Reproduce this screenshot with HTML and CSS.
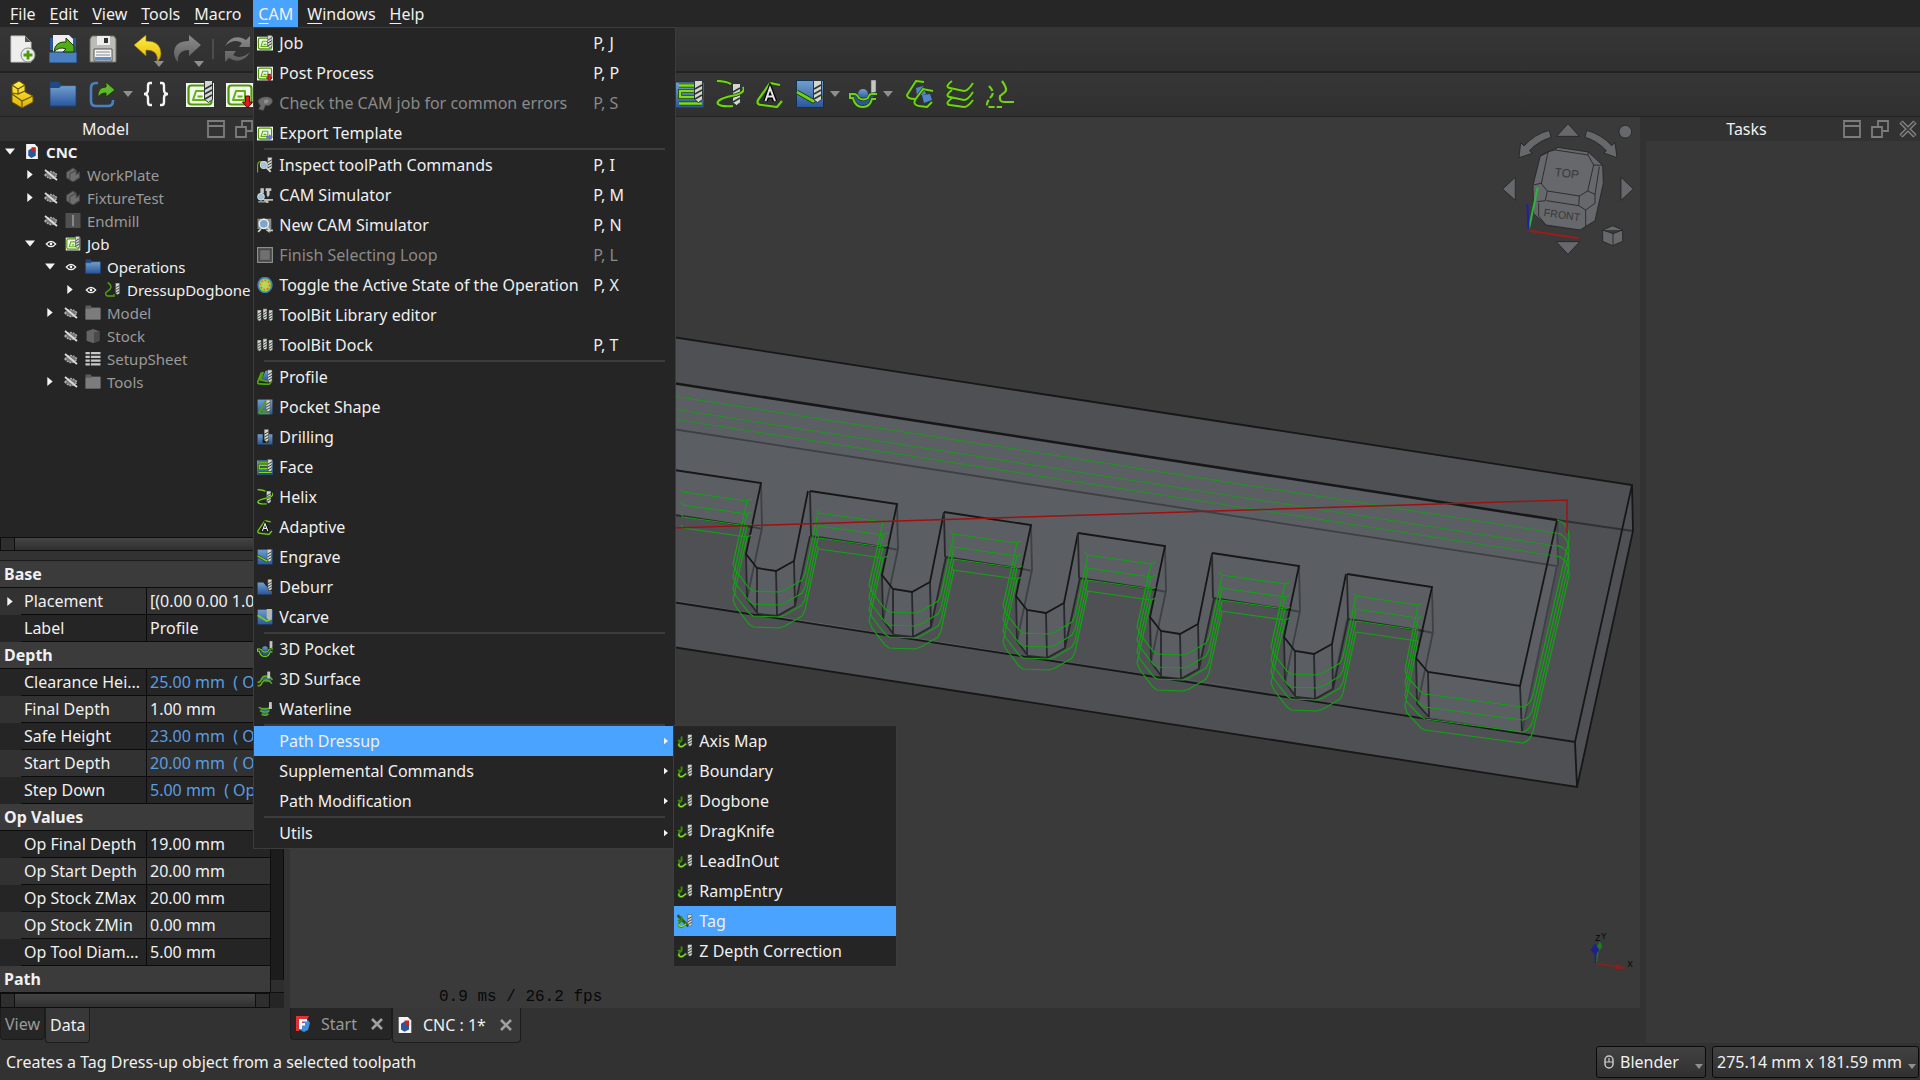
FILE: index.html
```
<!DOCTYPE html>
<html lang="en">
<head>
    <meta charset="UTF-8">
    <meta name="viewport" content="width=device-width, initial-scale=1.0">
    <title>CNC - FreeCAD</title>
    <link rel="stylesheet" href="styles.css">
</head>
<body>
    <!-- icon sprite -->
    <svg class="sprite" aria-hidden="true">
        <defs>
            <linearGradient id="blue" x1="0" y1="0" x2="0" y2="1"><stop offset="0" stop-color="#729fcf"/><stop offset="1" stop-color="#2a569c"/></linearGradient>
            <linearGradient id="grey" x1="0" y1="0" x2="0" y2="1"><stop offset="0" stop-color="#8c8c8c"/><stop offset="1" stop-color="#5c5c5c"/></linearGradient>
            <linearGradient id="gold" x1="0" y1="0" x2="0" y2="1"><stop offset="0" stop-color="#fff04a"/><stop offset="1" stop-color="#e0b400"/></linearGradient>
        </defs>
        <symbol id="drill" viewBox="0 0 9 23">
            <path d="M.5.5h8v19l-4 3-4-3z" fill="#d3d7cf" stroke="#2e3436"/>
            <path d="M1 9l7-4M1 14l7-4M1 19l7-4" stroke="#2e3436" stroke-width="1.6"/>
        </symbol>
        <symbol id="jobsheet" viewBox="0 0 28 28">
            <rect x="0" y="3" width="28" height="24" fill="#f4f6f2"/>
            <rect x="2.500" y="5.500" width="23" height="19" rx="3" fill="none" stroke="#4e9a06" stroke-width="2.200"/>
            <path d="M7 20l3-9h9v9zM11.500 16.500h5" fill="none" stroke="#5fb30a" stroke-width="2" stroke-linejoin="round"/>
        </symbol>
        <symbol id="job" viewBox="0 0 28 28"><use href="#jobsheet"/><use href="#drill" x="18" y="0" width="9" height="23"/></symbol>
        <symbol id="post" viewBox="0 0 28 28"><use href="#jobsheet"/><path d="M19.500 16h4v6h3l-5 6-5-6h3z" fill="#e01b1b" stroke="#5c0000"/></symbol>
        <symbol id="exporttpl" viewBox="0 0 28 28"><use href="#jobsheet"/><path d="M16 19h5v-3l7 5-7 6v-4h-5z" fill="#6a6af0"/></symbol>
        <symbol id="check" viewBox="0 0 28 28"><path d="M2 12c0-10 24-12 25-2 0 6-5 7-7 9l-5-1-4 9-8-2 3-6z" fill="#6c6c6c" stroke="#4a4a4a"/><path d="M12 10q4-4 9 0l-3 5h-5z" fill="#8e8e8e"/></symbol>
        <symbol id="inspect" viewBox="0 0 28 28"><path d="M1 27V15q0-7 6-7h4" fill="none" stroke="#5fb30a" stroke-width="2"/><use href="#drill" x="18" y="0" width="9" height="23"/><circle cx="12" cy="14" r="6" fill="#9fc0dc" stroke="#d3d7cf" stroke-width="2"/><path d="M17 19l7 7" stroke="#d3d7cf" stroke-width="3.500"/></symbol>
        <symbol id="sim" viewBox="0 0 28 28"><path d="M6 2h6v9H6zM15 2h10v5h-3v7l-3 4-2-4V7h-2z" fill="#c4c8c2"/><path d="M10 21h18v3H20v4h-4z" fill="#b9bdb6"/><circle cx="7" cy="17" r="6" fill="#9fc0dc" stroke="#dfe3dc" stroke-width="1.500"/><path d="M2 26h12" stroke="#b9bdb6" stroke-width="2"/></symbol>
        <symbol id="newsim" viewBox="0 0 28 28"><path d="M1 3h24v18H1z" fill="#8a8f8a"/><path d="M14 22h14v3h-6v3z" fill="#c4c8c2"/><circle cx="12" cy="12" r="8" fill="#7ea6cc" stroke="#eef1ec" stroke-width="2.500"/><path d="M7 21l-5 5M18 18l6 7" stroke="#d3d7cf" stroke-width="3"/></symbol>
        <symbol id="loop" viewBox="0 0 28 28"><rect x="1" y="1" width="26" height="26" fill="#4c4c4c" stroke="#8c8c8c" stroke-width="2"/><rect x="5" y="5" width="18" height="18" fill="#707070" stroke="#3c3c3c"/></symbol>
        <symbol id="toggle" viewBox="0 0 28 28"><ellipse cx="14" cy="14" rx="12" ry="13" fill="#8ae234" stroke="#3f7fbf" stroke-width="3"/><circle cx="14" cy="14" r="8" fill="#b6d65c" stroke="#f06a20" stroke-width="3" stroke-dasharray="3 3"/></symbol>
        <symbol id="bits" viewBox="0 0 28 28"><use href="#drill" x="0" y="4" width="8" height="22"/><use href="#drill" x="10" y="1" width="8" height="24"/><use href="#drill" x="20" y="4" width="8" height="22"/></symbol>
        <symbol id="profile" viewBox="0 0 28 28"><path d="M9 16l6-13h10v17H9z" fill="url(#blue)"/><path d="M8 6L1 23q0 3 4 3l16 1 5-6M11 5L6 19l14 3" fill="none" stroke="#4fa50a" stroke-width="3"/><use href="#drill" x="18" y="1" width="9" height="23"/></symbol>
        <symbol id="pocket" viewBox="0 0 28 28"><rect x="1" y="1" width="26" height="26" fill="url(#blue)"/><path d="M3 25L14 5h9M9 21h9l5-6M4 25h18" fill="none" stroke="#4fa50a" stroke-width="3"/><use href="#drill" x="15" y="1" width="9" height="22"/></symbol>
        <symbol id="drilling" viewBox="0 0 28 28"><path d="M1 9h9v14h10V9h7v18H1z" fill="url(#blue)"/><path d="M10 20h10v4H10z" fill="#111"/><use href="#drill" x="12" y="0" width="9" height="23"/><circle cx="17" cy="22" r="1.500" fill="#5fb30a"/></symbol>
        <symbol id="face" viewBox="0 0 28 28"><rect x="-1" y="2" width="29" height="26" fill="url(#blue)" stroke="#14304f"/><path d="M25 5.500H3M22 11H4v6h18M26 23.500H3" fill="none" stroke="#1e3c05" stroke-width="4"/><path d="M25 5.500H3M22 11H4v6h18M26 23.500H3" fill="none" stroke="#7ede12" stroke-width="2.400"/><use href="#drill" x="18" y="0" width="9" height="23"/></symbol>
        <symbol id="helix" viewBox="0 0 28 28"><use href="#drill" x="16" y="3" width="9" height="23"/><path d="M1 1q8 0 14 3M27 7q3 5-7 8-21 4-18 9 3 3 15 2" fill="none" stroke="#1e3c05" stroke-width="3.500"/><path d="M1 1q8 0 14 3M27 7q3 5-7 8-21 4-18 9 3 3 15 2" fill="none" stroke="#73d216" stroke-width="2.200"/></symbol>
        <symbol id="adaptive" viewBox="0 0 28 28"><path d="M24 5L14 3 2 20q-2 5 4 5l15 2 5-6" fill="none" stroke="#1e3c05" stroke-width="3.500"/><path d="M24 5L14 3 2 20q-2 5 4 5l15 2 5-6" fill="none" stroke="#73d216" stroke-width="2.200"/><path d="M9.500 21l4.500-13 5 13M11.500 16.500h5.500" fill="none" stroke="#000" stroke-width="4.500"/><path d="M9.500 21l4.500-13 5 13M11.500 16.500h5.500" fill="none" stroke="#e6e6e6" stroke-width="2"/></symbol>
        <symbol id="engrave" viewBox="0 0 28 28"><rect x=".5" y=".5" width="27" height="27" fill="url(#blue)" stroke="#14304f"/><path d="M1 12l16 9 9-6" fill="none" stroke="#1e3c05" stroke-width="4.500"/><path d="M1 12l16 9 9-6" fill="none" stroke="#73d216" stroke-width="2.800"/><use href="#drill" x="17" y="0" width="9" height="23"/></symbol>
        <symbol id="deburr" viewBox="0 0 28 28"><path d="M1 6h10l9 11v4h6v6H1z" fill="url(#blue)"/><use href="#drill" x="18" y="0" width="9" height="21"/></symbol>
        <symbol id="vcarve" viewBox="0 0 28 28"><rect x=".5" y=".5" width="27" height="27" fill="url(#blue)" stroke="#14304f"/><path d="M1 11l16 10 9-4" fill="none" stroke="#73d216" stroke-width="3"/><path d="M17 0h9v16l-4 4-5-4z" fill="#b8b8b0"/></symbol>
        <symbol id="pocket3d" viewBox="0 0 28 28"><path d="M3 15h22q-2 10-11 10T3 15z" fill="#2a569c"/><circle cx="14" cy="14" r="5" fill="url(#blue)"/><path d="M22 0h5v12l-5 2z" fill="#c4c8c2" stroke="#555" stroke-width=".6"/><path d="M28 14h-5q-3 0-4 4-5 3-9 0-2-4-5-4H1v4h3q2 9 10 9 7 0 9-8h4" fill="none" stroke="#1e3c05" stroke-width="3.200"/><path d="M28 14h-5q-3 0-4 4-5 3-9 0-2-4-5-4H1v4h3q2 9 10 9 7 0 9-8h4" fill="none" stroke="#73d216" stroke-width="2"/></symbol>
        <symbol id="surface3d" viewBox="0 0 28 28"><path d="M7 14q6-9 13-4l5 8-10 2z" fill="#35649e"/><path d="M1 20q5 0 7-6t10-5q6 1 9 7M1 26q6 0 8-6 4-5 8-4 6 1 9 6" fill="none" stroke="#5fb30a" stroke-width="2.600"/><path d="M18 1h5v12h-5z" fill="#c4c8c2"/></symbol>
        <symbol id="waterline" viewBox="0 0 28 28"><path d="M5 12h18l-4 12H10z" fill="#35649e"/><path d="M3 11q11 6 20 0M5 17q9 5 17 0M8 23q6 4 12 0" fill="none" stroke="#5fb30a" stroke-width="2.400"/><path d="M21 2h5v12h-5z" fill="#c4c8c2"/></symbol>
        <symbol id="dressup" viewBox="0 0 28 28"><path d="M8 6v7q-6 5-5 9 4 5 8 1l5-5M6 16l-4-4" fill="none" stroke="#3d8a05" stroke-width="3.400"/><path d="M3 19q1 6 7 4l6-4" fill="none" stroke="#8ae234" stroke-width="2"/><use href="#drill" x="18" y="2" width="9" height="22"/></symbol>
        <symbol id="dresstag" viewBox="0 0 28 28"><path d="M1 4l19 19" stroke="#2d5d16" stroke-width="5"/><use href="#dressup"/></symbol>
        <symbol id="dogbone" viewBox="0 0 28 28"><path d="M4 1q7 4 6 9t-7 8 0 8h13v-3" fill="none" stroke="#4fa50a" stroke-width="2.600"/><use href="#drill" x="18" y="1" width="9" height="24"/></symbol>
        <symbol id="array" viewBox="0 0 28 28"><path d="M10 8l7-2 3 8-9 2zM16 15l8-1 2 6-8 3z" fill="#4f86c6"/><path d="M18 2L10 1 1 15q0 4 8 4M27 11L17 9 9 20q-2 5 4 6l8 1 5-5" fill="none" stroke="#1e3c05" stroke-width="3.200"/><path d="M18 2L10 1 1 15q0 4 8 4M27 11L17 9 9 20q-2 5 4 6l8 1 5-5" fill="none" stroke="#73d216" stroke-width="2"/></symbol>
        <symbol id="copyop" viewBox="0 0 28 28"><path d="M6 1q-8 6-2 7l14 3q4 0 9-8M6 10q-8 6-2 7l14 3q4 0 9-8M6 18q-8 6-2 7l14 2q4 0 9-7" fill="none" stroke="#1e3c05" stroke-width="3.200"/><path d="M6 1q-8 6-2 7l14 3q4 0 9-8M6 10q-8 6-2 7l14 3q4 0 9-8M6 18q-8 6-2 7l14 2q4 0 9-7" fill="none" stroke="#73d216" stroke-width="2"/></symbol>
        <symbol id="simplecopy" viewBox="0 0 28 28"><path d="M16 1q6 8 3 11l-5 4q-1 6 4 6h10" fill="none" stroke="#73d216" stroke-width="2.200"/><path d="M3 6q7 7 1 12-6 8 0 9h12" fill="none" stroke="#73d216" stroke-width="2.200" stroke-dasharray="6 2"/></symbol>
        <symbol id="new" viewBox="0 0 28 28"><path d="M2 1h14l6 6v20H2z" fill="#eeeeec" stroke="#c8c8c4"/><path d="M16 1l6 6h-6z" fill="#555753"/><circle cx="19" cy="20" r="7" fill="#eeeeec" stroke="#888a85"/><path d="M19 15.500v9M14.500 20h9" stroke="#4e9a06" stroke-width="2.800"/></symbol>
        <symbol id="open" viewBox="0 0 28 28"><path d="M1 3h4v12H1zM23 3h4v14h-4z" fill="#2b5a9b"/><path d="M4 0h16l4 4v14H4z" fill="#eeeeec"/><path d="M0 17h28v11H0z" fill="#4a80c0" stroke="#1c3c66"/><path d="M5 17Q6 6 17 7V3l8 8v6H14l3-3q-7-3-12 3z" fill="#4fae12" stroke="#1e3c05"/></symbol>
        <symbol id="save" viewBox="0 0 28 28"><path d="M3 1h22l2 3v23H1V4z" fill="#b9bcb7" stroke="#6e706c"/><path d="M8 1h13v9H8z" fill="#eee"/><path d="M15 3h4v5h-4z" fill="#333"/><path d="M5 14h18v12H5z" fill="#f4f4f4" stroke="#555"/><path d="M7 17h14M7 20h14" stroke="#888"/><path d="M6 22h16v3H6z" fill="#5b8fd0"/></symbol>
        <symbol id="undo" viewBox="0 0 28 28"><path d="M0 10L12 0v6q15 0 15 13 0 4-4 8 2-12-11-12v6z" fill="url(#gold)" stroke="#8a6d00" stroke-width=".6"/></symbol>
        <symbol id="redo" viewBox="0 0 28 28"><path d="M27 10L15 0v6Q1 6 0 17q0 6 4 10-1-12 11-12v6z" fill="url(#grey)"/></symbol>
        <symbol id="refresh" viewBox="0 0 28 28"><path d="M1 11Q7 0 18 3l4 2 4-4v11H15l3-4Q10 3 1 11zM26 17q-6 11-17 8l-4-2-4 4V16h11l-3 4q8 5 17-3z" fill="url(#grey)"/></symbol>
        <symbol id="part" viewBox="0 0 28 28"><path d="M3 5l7-4 6 4v7l8 4v6l-11 6-10-6z" fill="url(#gold)" stroke="#6b5200"/><path d="M3 5l6 4 7-4M9 9v5l7-3M3 14l10 7 11-5M13 21v6M9 14l-6-1" fill="none" stroke="#6b5200" stroke-width="1.200"/></symbol>
        <symbol id="folder" viewBox="0 0 30 28"><path d="M1 1h10l2 4h16v22H1z" fill="#1f4a86"/><path d="M1 7h10l2-2h16v22H1z" fill="url(#blue)" stroke="#173a68" stroke-width=".8"/></symbol>
        <symbol id="folder-off" viewBox="0 0 30 28"><path d="M1 1h10l2 4h16v22H1z" fill="#5c5c5c"/><path d="M1 7h10l2-2h16v22H1z" fill="#7c7c7c"/></symbol>
        <symbol id="link" viewBox="0 0 28 28"><path d="M9 3H7Q2 3 2 8v13q0 5 5 5h12q5 0 5-5v-1" fill="none" stroke="#4a80c0" stroke-width="2.600"/><path d="M9 18Q8 7 17 7V2l9 8-9 7v-4q-6 0-8 5z" fill="#5fb82a" stroke="#1e3c05"/></symbol>
        <symbol id="braces" viewBox="0 0 28 28"><path d="M10 3H8Q6 3 6 6v4q0 4-4 4 4 0 4 4v4q0 3 2 3h2M18 3h2q2 0 2 3v4q0 4 4 4-4 0-4 4v4q0 3-2 3h-2" fill="none" stroke="#f4f4f4" stroke-width="2.400"/></symbol>
        <symbol id="caret" viewBox="0 0 10 6"><path d="M0 0h10L5 6z" fill="#8f8f8f"/></symbol>
        <symbol id="tri-r" viewBox="0 0 6 10"><path d="M0 0l6 5-6 5z" fill="#f4f4f4"/></symbol>
        <symbol id="tri-d" viewBox="0 0 10 6"><path d="M0 0h10L5 6z" fill="#f4f4f4"/></symbol>
        <symbol id="eye" viewBox="-2 -1 18 12"><path d="M1 5q6-7 12 0-6 7-12 0z" fill="#111" stroke="#f4f4f4" stroke-width="1.600"/><circle cx="7" cy="5" r="1.800" fill="#f4f4f4"/></symbol>
        <symbol id="eye-off" viewBox="0 0 14 12"><path d="M1 6q6-7 12 0-6 7-12 0z" fill="#777" stroke="#b0b0b0" stroke-width="1.400" stroke-dasharray="2 1"/><path d="M1 1l12 10" stroke="#dcdcdc" stroke-width="1.800"/></symbol>
        <symbol id="doc" viewBox="0 0 11 14"><path d="M0 0h8l3 3v11H0z" fill="#f4f4f4"/><path d="M2 6l3-2 4 2v5l-4 2-3-2z" fill="#2a569c"/><path d="M5 3h4v4H6z" fill="#d41f1f"/></symbol>
        <symbol id="body" viewBox="0 0 14 14"><path d="M1 5l6-4 3 2v4l3-2v5l-6 4-6-4z" fill="#6e6e6e" stroke="#484848"/><path d="M4 6l6-3M4 6v5" stroke="#484848"/></symbol>
        <symbol id="endmill" viewBox="0 0 16 16"><path d="M0 0h16v16H0z" fill="#505050"/><path d="M7 2h2v12H7z" fill="#8c8c8c"/></symbol>
        <symbol id="stock" viewBox="0 0 14 14"><path d="M1 3l6-2 6 2v9l-6 2-6-2z" fill="#646464"/><path d="M8 4l5-1v9l-5 2z" fill="#4a4a4a"/></symbol>
        <symbol id="sheet" viewBox="0 0 14 14"><path d="M0 1h4v2H0zM5 1h9v2H5zM0 4.500h4v2H0zM5 4.500h9v2H5zM0 8h4v2H0zM5 8h9v2H5zM0 11.500h4v2H0zM5 11.500h9v2H5z" fill="#c8c8c8"/></symbol>
        <symbol id="win-dock" viewBox="0 0 18 18"><path d="M1 1h16v16H1zM1 6h16" fill="none" stroke="#7c7c7c" stroke-width="1.800"/></symbol>
        <symbol id="win-float" viewBox="0 0 18 18"><path d="M7 6V1h10v10h-5M1 7h10v10H1z" fill="none" stroke="#7c7c7c" stroke-width="1.800"/></symbol>
        <symbol id="win-close" viewBox="0 0 18 18"><path d="M2 2l14 14M16 2L2 16" stroke="#8a8a8a" stroke-width="4.500"/><path d="M2.500 2.500l13 13M15.500 2.500l-13 13" stroke="#3c3c3c" stroke-width="1.800"/></symbol>
        <symbol id="tab-close" viewBox="0 0 12 12"><path d="M1 1l10 10M11 1L1 11" stroke="#a0a0a0" stroke-width="2.600"/></symbol>
        <symbol id="freecad" viewBox="0 0 14 16"><path d="M0 0h13l-2 4-8 11H0z" fill="#e0303a"/><path d="M5 8l7-4 2 3-2 7-4 2-4-2z" fill="#3f8fe0"/><path d="M3 3h8v2.500H6V7h3v2.500H6V13H3z" fill="#fff"/></symbol>
        <symbol id="mouse" viewBox="0 0 10 14"><rect x="1" y="1" width="8" height="12" rx="4" fill="none" stroke="#c8c8c8" stroke-width="1.500"/><path d="M5 3v4M1 7h8" stroke="#c8c8c8" stroke-width="1.200"/></symbol>
    </svg>

    <nav class="menubar">
        <button class="menubar-item"><u>F</u>ile</button>
        <button class="menubar-item"><u>E</u>dit</button>
        <button class="menubar-item"><u>V</u>iew</button>
        <button class="menubar-item"><u>T</u>ools</button>
        <button class="menubar-item"><u>M</u>acro</button>
        <div class="menubar-open">
            <button class="menubar-item active"><u>C</u>AM</button>
            <div class="menu">
                <button class="menu-item"><svg class="mi"><use href="#job"/></svg><span>Job</span><kbd>P, J</kbd></button>
                <button class="menu-item"><svg class="mi"><use href="#post"/></svg><span>Post Process</span><kbd>P, P</kbd></button>
                <button class="menu-item off"><svg class="mi"><use href="#check"/></svg><span>Check the CAM job for common errors</span><kbd>P, S</kbd></button>
                <button class="menu-item"><svg class="mi"><use href="#exporttpl"/></svg><span>Export Template</span></button>
                <hr>
                <button class="menu-item"><svg class="mi"><use href="#inspect"/></svg><span>Inspect toolPath Commands</span><kbd>P, I</kbd></button>
                <button class="menu-item"><svg class="mi"><use href="#sim"/></svg><span>CAM Simulator</span><kbd>P, M</kbd></button>
                <button class="menu-item"><svg class="mi"><use href="#newsim"/></svg><span>New CAM Simulator</span><kbd>P, N</kbd></button>
                <button class="menu-item off"><svg class="mi"><use href="#loop"/></svg><span>Finish Selecting Loop</span><kbd>P, L</kbd></button>
                <button class="menu-item"><svg class="mi"><use href="#toggle"/></svg><span>Toggle the Active State of the Operation</span><kbd>P, X</kbd></button>
                <button class="menu-item"><svg class="mi"><use href="#bits"/></svg><span>ToolBit Library editor</span></button>
                <button class="menu-item"><svg class="mi"><use href="#bits"/></svg><span>ToolBit Dock</span><kbd>P, T</kbd></button>
                <hr>
                <button class="menu-item"><svg class="mi"><use href="#profile"/></svg><span>Profile</span></button>
                <button class="menu-item"><svg class="mi"><use href="#pocket"/></svg><span>Pocket Shape</span></button>
                <button class="menu-item"><svg class="mi"><use href="#drilling"/></svg><span>Drilling</span></button>
                <button class="menu-item"><svg class="mi"><use href="#face"/></svg><span>Face</span></button>
                <button class="menu-item"><svg class="mi"><use href="#helix"/></svg><span>Helix</span></button>
                <button class="menu-item"><svg class="mi"><use href="#adaptive"/></svg><span>Adaptive</span></button>
                <button class="menu-item"><svg class="mi"><use href="#engrave"/></svg><span>Engrave</span></button>
                <button class="menu-item"><svg class="mi"><use href="#deburr"/></svg><span>Deburr</span></button>
                <button class="menu-item"><svg class="mi"><use href="#vcarve"/></svg><span>Vcarve</span></button>
                <hr>
                <button class="menu-item"><svg class="mi"><use href="#pocket3d"/></svg><span>3D Pocket</span></button>
                <button class="menu-item"><svg class="mi"><use href="#surface3d"/></svg><span>3D Surface</span></button>
                <button class="menu-item"><svg class="mi"><use href="#waterline"/></svg><span>Waterline</span></button>
                <hr>
                <div class="menu-parent">
                    <button class="menu-item active"><i class="mi"></i><span>Path Dressup</span><svg class="more"><use href="#tri-r"/></svg></button>
                    <div class="menu submenu">
                        <button class="menu-item"><svg class="mi"><use href="#dressup"/></svg><span>Axis Map</span></button>
                        <button class="menu-item"><svg class="mi"><use href="#dressup"/></svg><span>Boundary</span></button>
                        <button class="menu-item"><svg class="mi"><use href="#dressup"/></svg><span>Dogbone</span></button>
                        <button class="menu-item"><svg class="mi"><use href="#dressup"/></svg><span>DragKnife</span></button>
                        <button class="menu-item"><svg class="mi"><use href="#dressup"/></svg><span>LeadInOut</span></button>
                        <button class="menu-item"><svg class="mi"><use href="#dressup"/></svg><span>RampEntry</span></button>
                        <button class="menu-item active"><svg class="mi"><use href="#dresstag"/></svg><span>Tag</span></button>
                        <button class="menu-item"><svg class="mi"><use href="#dressup"/></svg><span>Z Depth Correction</span></button>
                    </div>
                </div>
                <button class="menu-item"><i class="mi"></i><span>Supplemental Commands</span><svg class="more"><use href="#tri-r"/></svg></button>
                <button class="menu-item"><i class="mi"></i><span>Path Modification</span><svg class="more"><use href="#tri-r"/></svg></button>
                <hr>
                <button class="menu-item"><i class="mi"></i><span>Utils</span><svg class="more"><use href="#tri-r"/></svg></button>
            </div>
        </div>
        <button class="menubar-item"><u>W</u>indows</button>
        <button class="menubar-item"><u>H</u>elp</button>
    </nav>

    <div class="toolbar toolbar-file">
        <div class="tool-group">
            <button class="tool" aria-label="New"><svg class="ti"><use href="#new"/></svg></button>
            <button class="tool" aria-label="Open"><svg class="ti"><use href="#open"/></svg></button>
            <button class="tool" aria-label="Save"><svg class="ti"><use href="#save"/></svg></button>
        </div>
        <div class="tool-group">
            <button class="tool" aria-label="Undo"><svg class="ti"><use href="#undo"/></svg><svg class="corner"><use href="#caret"/></svg></button>
            <button class="tool" aria-label="Redo"><svg class="ti"><use href="#redo"/></svg><svg class="corner"><use href="#caret"/></svg></button>
        </div>
        <span class="tool-sep"></span>
        <button class="tool" aria-label="Refresh"><svg class="ti"><use href="#refresh"/></svg></button>
    </div>
    <div class="toolbar toolbar-cam">
        <div class="tool-group">
            <button class="tool" aria-label="Part"><svg class="ti"><use href="#part"/></svg></button>
            <button class="tool" aria-label="Group"><svg class="ti"><use href="#folder"/></svg></button>
            <button class="tool" aria-label="Link"><svg class="ti"><use href="#link"/></svg></button>
            <svg class="drop"><use href="#caret"/></svg>
            <button class="tool" aria-label="Expression"><svg class="ti"><use href="#braces"/></svg></button>
        </div>
        <div class="tool-group">
            <button class="tool" aria-label="Job"><svg class="ti"><use href="#job"/></svg></button>
            <button class="tool" aria-label="Post Process"><svg class="ti"><use href="#post"/></svg></button>
        </div>
        <div class="tool-group tool-group-ops">
            <button class="tool" aria-label="Face"><svg class="ti"><use href="#face"/></svg></button>
            <button class="tool" aria-label="Helix"><svg class="ti"><use href="#helix"/></svg></button>
            <button class="tool" aria-label="Adaptive"><svg class="ti"><use href="#adaptive"/></svg></button>
            <button class="tool" aria-label="Engrave"><svg class="ti"><use href="#engrave"/></svg></button>
            <svg class="drop"><use href="#caret"/></svg>
            <button class="tool" aria-label="3D Pocket"><svg class="ti"><use href="#pocket3d"/></svg></button>
            <svg class="drop"><use href="#caret"/></svg>
        </div>
        <div class="tool-group">
            <button class="tool" aria-label="Array"><svg class="ti"><use href="#array"/></svg></button>
            <button class="tool" aria-label="Copy"><svg class="ti"><use href="#copyop"/></svg></button>
            <button class="tool" aria-label="Simple Copy"><svg class="ti"><use href="#simplecopy"/></svg></button>
        </div>
    </div>

    <main class="workspace">
        <aside class="dock dock-model">
            <div class="dock-title">
                <span>Model</span>
                <svg class="wi"><use href="#win-dock"/></svg><svg class="wi"><use href="#win-float"/></svg><svg class="wi"><use href="#win-close"/></svg>
            </div>
            <ul class="tree">
                <li class="node root"><svg class="arrow"><use href="#tri-d"/></svg><svg class="ni"><use href="#doc"/></svg><b>CNC</b></li>
                <li class="node l1 off"><svg class="arrow"><use href="#tri-r"/></svg><svg class="vis"><use href="#eye-off"/></svg><svg class="ni"><use href="#body"/></svg>WorkPlate</li>
                <li class="node l1 off"><svg class="arrow"><use href="#tri-r"/></svg><svg class="vis"><use href="#eye-off"/></svg><svg class="ni"><use href="#body"/></svg>FixtureTest</li>
                <li class="node l1 off"><i class="arrow"></i><svg class="vis"><use href="#eye-off"/></svg><svg class="ni"><use href="#endmill"/></svg>Endmill</li>
                <li class="node l1"><svg class="arrow"><use href="#tri-d"/></svg><svg class="vis"><use href="#eye"/></svg><svg class="ni"><use href="#job"/></svg>Job</li>
                <li class="node l2"><svg class="arrow"><use href="#tri-d"/></svg><svg class="vis"><use href="#eye"/></svg><svg class="ni"><use href="#folder"/></svg>Operations</li>
                <li class="node l3"><svg class="arrow"><use href="#tri-r"/></svg><svg class="vis"><use href="#eye"/></svg><svg class="ni"><use href="#dogbone"/></svg>DressupDogbone</li>
                <li class="node l2 off"><svg class="arrow"><use href="#tri-r"/></svg><svg class="vis"><use href="#eye-off"/></svg><svg class="ni"><use href="#folder-off"/></svg>Model</li>
                <li class="node l2 off"><i class="arrow"></i><svg class="vis"><use href="#eye-off"/></svg><svg class="ni"><use href="#stock"/></svg>Stock</li>
                <li class="node l2 off"><i class="arrow"></i><svg class="vis"><use href="#eye-off"/></svg><svg class="ni"><use href="#sheet"/></svg>SetupSheet</li>
                <li class="node l2 off"><svg class="arrow"><use href="#tri-r"/></svg><svg class="vis"><use href="#eye-off"/></svg><svg class="ni"><use href="#folder-off"/></svg>Tools</li>
            </ul>
            <div class="hscroll"><i class="sb-btn"></i><i class="sb-thumb"></i><i class="sb-btn"></i></div>

            <div class="props">
                <div class="props-body">
                    <table class="props-table">
                        <colgroup><col class="col-ind"><col class="col-name"><col></colgroup>
                        <tr class="group"><th colspan="3">Base</th></tr>
                        <tr><td class="ind"><svg class="arrow"><use href="#tri-r"/></svg></td><td class="name">Placement</td><td>[(0.00 0.00 1.0</td></tr>
                        <tr><td class="ind"></td><td class="name">Label</td><td>Profile</td></tr>
                        <tr class="group"><th colspan="3">Depth</th></tr>
                        <tr><td class="ind"></td><td class="name">Clearance Hei...</td><td class="expr">25.00 mm&nbsp; ( O</td></tr>
                        <tr><td class="ind"></td><td class="name">Final Depth</td><td>1.00 mm</td></tr>
                        <tr><td class="ind"></td><td class="name">Safe Height</td><td class="expr">23.00 mm&nbsp; ( O</td></tr>
                        <tr><td class="ind"></td><td class="name">Start Depth</td><td class="expr">20.00 mm&nbsp; ( O</td></tr>
                        <tr><td class="ind"></td><td class="name">Step Down</td><td class="expr">5.00 mm&nbsp; ( Op</td></tr>
                        <tr class="group"><th colspan="3">Op Values</th></tr>
                        <tr><td class="ind"></td><td class="name">Op Final Depth</td><td>19.00 mm</td></tr>
                        <tr><td class="ind"></td><td class="name">Op Start Depth</td><td>20.00 mm</td></tr>
                        <tr><td class="ind"></td><td class="name">Op Stock ZMax</td><td>20.00 mm</td></tr>
                        <tr><td class="ind"></td><td class="name">Op Stock ZMin</td><td>0.00 mm</td></tr>
                        <tr><td class="ind"></td><td class="name">Op Tool Diam...</td><td>5.00 mm</td></tr>
                        <tr class="group"><th colspan="3">Path</th></tr>
                    </table>
                    <div class="vscroll"><i class="sb-btn"></i></div>
                </div>
                <div class="hscroll props-scroll"><i class="sb-btn"></i><i class="sb-thumb"></i><i class="sb-btn"></i></div>
            </div>
            <div class="tabs">
                <button class="tab">View</button>
                <button class="tab active">Data</button>
            </div>
        </aside>

        <section class="center">
            <div class="viewport">
                <svg class="scene" viewBox="290 117 1350 891" preserveAspectRatio="xMaxYMin slice">
                    <defs>
                        <!-- one slot and the tooth after it, origin at the slot's upper right corner -->
                        <path id="floor" d="M-8 44L-15 71-14 116-3 131-119 112-101 102-86 32z"/>
                        <path id="cut" d="M-87-13L0 0-15 71-4 85 15 88 33 78 47 8"/>
                        <path id="cut-low" d="M-86 32L-8 44M-15 71L-14 116-3 131 16 133 34 123 49 53M-4 85v45M15 88l1 45M33 78l1 45M-87-13l1 45"/>
                        <path id="cut-back" d="M0 0L1 45-14 116M-8 44l9 2"/>
                        <path id="pass" d="M-80 6l2 3L-14 18-9 16M-14 18L-28 81-25 88-12 105-8 108 18 109 24 107 41 97 44 91 57 30"/>
                        <g id="passes"><use href="#pass"/><use href="#pass" y="13"/><use href="#pass" y="25"/><use href="#pass" y="36"/></g>
                        <path id="lastpass" d="M1418 605L1405 670l2 7 14 15 4 2 97 13q8-1 11-12l36-155q1-16-12-20"/>
                        <g id="slot-lines">
                            <use href="#cut-back" stroke="#3e4044"/>
                            <use href="#cut-low" stroke="#28292b"/>
                            <use href="#cut" stroke="#171717"/>
                        </g>
                    </defs>
                    <path d="M640 332L1632 485 1633 531 1577 787 640 642z" fill="#4f5054"/>
                    <path d="M640 378L1557 520 1558 566 1522 732 1429 717 640 597z" fill="#5b5e63"/>
                    <g fill="#4f5054">
                        <use href="#floor" x="761" y="483"/><use href="#floor" x="897" y="504"/><use href="#floor" x="1031" y="525"/>
                        <use href="#floor" x="1165" y="546"/><use href="#floor" x="1299" y="566"/><use href="#floor" x="1432" y="587"/>
                    </g>
                    <g fill="none" stroke-width="1.800">
                        <path d="M640 424L1557 566 1522 732M1557 520l1 46" stroke="#3e4044"/>
                        <path d="M1557 520l76 11" stroke="#303134"/>
                        <use href="#slot-lines" x="761" y="483"/><use href="#slot-lines" x="897" y="504"/><use href="#slot-lines" x="1031" y="525"/>
                        <use href="#slot-lines" x="1165" y="546"/><use href="#slot-lines" x="1299" y="566"/>
                        <path d="M1432 587l1 45-15 71M1424 631l9 2" stroke="#3e4044"/>
                        <path d="M1347 574l1 45 76 12M1416 658l1 46 12 13M1428 672l1 45M1520 686l2 46" stroke="#28292b"/>
                        <path d="M1347 574l85 13-16 71 12 14 92 14 37-166" stroke="#171717"/>
                        <path d="M640 332L1632 485 1575 742 640 597M1632 485l1 46-56 256L640 642M1575 742l2 45" stroke="#171717"/>
                        <path d="M640 378L1557 520" stroke="#171717" stroke-width="2.600"/>
                    </g>
                    <g fill="none" stroke="#12a312" stroke-width="1.200">
                        <path d="M640 391L1562 534M640 404L1562 547M640 414L1562 557" opacity=".7"/>
                        <use href="#passes" x="761" y="483"/><use href="#passes" x="897" y="504"/><use href="#passes" x="1031" y="525"/>
                        <use href="#passes" x="1165" y="546"/><use href="#passes" x="1299" y="566"/>
                        <path d="M1354 593l2 3 62 9 4-2M1354 606l2 3 62 9 4-2M1356 621l62 9M1356 632l62 9"/>
                        <use href="#lastpass"/><use href="#lastpass" y="13"/><use href="#lastpass" y="25"/><use href="#lastpass" y="36"/>
                    </g>
                    <path d="M640 529L1567 500v33" fill="none" stroke="#a01010" stroke-width="1.400"/>

                    <!-- navigation cube -->
                    <g transform="translate(1480 110) scale(.3333)" fill="#66686b" stroke="#232323" stroke-width="2.500" stroke-linejoin="round">
                        <path d="M264 41l34 38h-68zM264 433l35-38h-70zM68 237l38-35v69zM460 237l-37-35v69z"/>
                        <path d="M208 61q-44 11-76 47l-10-10-5 45 40-13-9-8q27-28 65-40zM320 61q46 13 75 46l10-9 6 45-39-14 7-7q-28-30-64-40z"/>
                        <circle cx="436" cy="65" r="19"/>
                        <path d="M368 360l30-13 30 13v34l-30 13-30-13zM368 360l31 11 29-11M399 371v36"/>
                        <path d="M232 112L325 126 368 166 370 220 345 332 300 360 198 345 161 311 159 226 181 138z"/>
                        <path d="M205 125l21-5 98 15 17 30-18 78-25 15-96-15-18-22 18-84zM181 138l24-13M232 112l-6 8M325 126l-1 9M368 166l-27-1M186 219l-25 6M202 243l-6 29-24 3M298 257l-2 30-96-15M323 243l22 10v27l-28 20-21-13M317 300v50M176 280v38l22 27M358 170l-13 84" />
                        <g stroke="none" fill="#37393b">
                            <text class="cube-text" x="223" y="198" transform="rotate(7 223 198)">TOP</text>
                            <text class="cube-text front" x="190" y="318" transform="rotate(8 190 318)">FRONT</text>
                        </g>
                        <g fill="none" stroke-width="6">
                            <path d="M148 362l148 23" stroke="#9c1c1c"/><path d="M146 360l27-127" stroke="#2fb53a"/><path d="M146 360l-4-78" stroke="#2020a0"/>
                        </g>
                    </g>
                    <!-- axis cross -->
                    <g transform="translate(1540 900) scale(.3333)">
                        <path d="M167 190l78 12" stroke="#8a1f1f" stroke-width="5"/><path d="M228 192l32 13-34 4z" fill="#8a1f1f"/>
                        <path d="M169 188l7-46" stroke="#1f7a1f" stroke-width="4"/><path d="M180 124l7 16-9 12-9-10z" fill="#1f7a1f"/>
                        <path d="M166 190v-40" stroke="#20208a" stroke-width="5"/><path d="M165 130l13 20-13 16-13-16z" fill="#20208a"/>
                        <g class="axis-text"><text x="166" y="124">Z</text><text x="183" y="117">Y</text><text x="262" y="200">X</text></g>
                    </g>
                </svg>
                <span class="fps">0.9 ms / 26.2 fps</span>
            </div>
            <div class="tabs mdi">
                <button class="tab"><svg class="tab-ico"><use href="#freecad"/></svg>Start<svg class="x"><use href="#tab-close"/></svg></button>
                <button class="tab active"><svg class="tab-ico"><use href="#doc"/></svg>CNC : 1*<svg class="x"><use href="#tab-close"/></svg></button>
            </div>
        </section>

        <aside class="dock dock-tasks">
            <div class="dock-title">
                <span>Tasks</span>
                <svg class="wi"><use href="#win-dock"/></svg><svg class="wi"><use href="#win-float"/></svg><svg class="wi"><use href="#win-close"/></svg>
            </div>
            <div class="tasks-body"></div>
        </aside>
    </main>

    <footer class="statusbar">
        <span class="status-text">Creates a Tag Dress-up object from a selected toolpath</span>
        <div class="combo combo-nav">
            <svg class="combo-ico"><use href="#mouse"/></svg>
            <select aria-label="Navigation style"><option>Blender</option></select>
            <svg class="combo-arrow"><use href="#caret"/></svg>
        </div>
        <div class="combo">
            <select aria-label="Dimensions"><option>275.14 mm x 181.59 mm</option></select>
            <svg class="combo-arrow"><use href="#caret"/></svg>
        </div>
    </footer>
</body>
</html>
```

FILE: styles.css
```
* { box-sizing: border-box; }
body {
    margin: 0;
    height: 100vh;
    display: flex;
    flex-direction: column;
    overflow: hidden;
    background: #323232;
    color: #f0f0f0;
    font-family: "Noto Sans", sans-serif;
    font-size: 16px;
    line-height: 22px;
}
button, select { font: inherit; color: inherit; background: none; border: 0; padding: 0; margin: 0; }
svg { display: block; flex: none; }
.sprite { position: absolute; width: 0; height: 0; }

/* menu bar */
.menubar { display: flex; gap: 4px; height: 27px; padding-left: 5px; background: #262626; }
.menubar-item { height: 27px; padding: 0 5px; }
.menubar-item u { text-underline-offset: 3px; text-decoration-thickness: 1px; }
.menubar-open { position: relative; margin-left: 3px; }
.menubar .active { background: #4aa3ff; }

.menu {
    position: absolute;
    z-index: 10;
    top: 27px;
    left: 0;
    width: 423px;
    border: 1px solid #3c3c3c;
    background: #252525;
}
.menu hr { height: 2px; margin: 0 10px; border: 0; background: #3c3c3c; }
.menu-item {
    display: flex;
    align-items: center;
    width: 100%;
    height: 30px;
    padding: 0 3px;
    text-align: left;
    white-space: nowrap;
}
.menu-item span { flex: 1; }
.menu-item kbd { width: 79px; font: inherit; }
.menu-item.off { color: #8a8a8a; }
.mi { width: 16px; height: 16px; margin-right: 6px; }
.more { width: 4px; height: 8px; margin-right: 4px; }
.menu-parent { position: relative; }
.submenu { top: -1px; left: 419px; width: 224px; }

/* toolbars */
.toolbar {
    display: flex;
    align-items: center;
    height: 46px;
    padding: 0 9px 1px;
    border-bottom: 2px solid #222;
    background: linear-gradient(#363636, #303030);
}
.toolbar-file { gap: 17px; }
.toolbar-cam { gap: 16px; height: 44px; padding-bottom: 2px; border-bottom-width: 1px; }
.tool-group { display: flex; align-items: center; gap: 12px; }
.tool-group-ops { margin-left: 406px; }
.ti { width: 28px; height: 28px; }
.tool { position: relative; }
.corner { position: absolute; right: -2px; bottom: -4px; width: 10px; height: 6px; }
.tool-sep { width: 2px; height: 20px; margin: 0 -7px; background: #4c4c4c; }
.drop { width: 10px; height: 6px; margin: 0 -3px 0 -6px; }

/* docks */
.workspace { flex: 1; min-height: 0; display: flex; gap: 6px; }
.dock { display: flex; flex-direction: column; }
.dock-model { width: 284px; }
.dock-tasks { width: 274px; }
.dock-title { display: flex; align-items: center; gap: 10px; height: 24px; padding: 0 3px 0 14px; }
.dock-title span { flex: 1; text-align: center; }
.wi { width: 18px; height: 18px; }
.tasks-body { flex: 1; background: #383838; }

.tree { flex: 1; min-height: 0; margin: 0; padding: 0; overflow: hidden; list-style: none; background: #252525; font-size: 15px; }
.node { display: flex; align-items: center; height: 23px; padding: 0 0 2px 5px; }
.node.off { color: #9a9a9a; }
.node .arrow { margin-right: 9px; }
.arrow { width: 10px; height: 9px; }
.vis { width: 14px; height: 12px; margin-right: 7px; }
.ni { width: 16px; height: 15px; margin-right: 6px; }
.node.l1 { padding-left: 25px; }
.node.l2 { padding-left: 45px; }
.node.l3 { padding-left: 65px; }

.hscroll { display: flex; gap: 1px; height: 14px; border: 1px solid #0e0e0e; background: #0e0e0e; }
.sb-btn { width: 13px; background: #2e2e2e; }
.sb-thumb { flex: 1; background: linear-gradient(#444, #303030); }

/* property editor */
.props { margin-top: 9px; background: #252525; }
.props-body { display: flex; height: 433px; border-top: 1px solid #1c1c1c; }
.props-table { width: 270px; table-layout: fixed; border-spacing: 0; }
.col-ind { width: 21px; }
.col-name { width: 126px; }
.props-table tr { height: 27px; background: #323232; }
.props-table tr:nth-child(odd) { background: #252525; }
.props-table tr.group { background: #3b3b3b; }
.props-table th { padding: 0 4px 1px; text-align: left; border-bottom: 1px solid #0c0c0c; }
.props-table td { padding: 0 3px 1px; white-space: nowrap; border-bottom: 1px solid #0c0c0c; }
.props-table td.ind { padding: 0 5px; border: 0; }
.props-table td.name { border-right: 1px solid #0c0c0c; }
.props-table .expr { color: #5a9de0; }
.vscroll { display: flex; flex-direction: column; justify-content: flex-end; width: 14px; border: 1px solid #0e0e0e; background: #1c1c1c; }
.vscroll .sb-btn { height: 12px; }
.props-scroll { width: 270px; height: 15px; }

/* tabs */
.tabs { display: flex; align-items: flex-start; height: 35px; }
.tab {
    display: flex;
    align-items: center;
    height: 32px;
    padding: 0 4px;
    border: 1px solid #1c1c1c;
    border-top: 0;
    border-radius: 0 0 4px 4px;
    background: #262626;
    color: #9a9a9a;
}
.tab.active { height: 35px; background: #383838; color: #f0f0f0; }
.mdi .tab { padding: 0 8px 0 5px; }
.tab-ico { width: 14px; height: 16px; margin-right: 11px; }
.x { width: 12px; height: 12px; margin-left: 14px; }

/* 3d view */
.center { flex: 1; min-width: 0; display: flex; flex-direction: column; }
.viewport { position: relative; flex: 1; min-height: 0; background: #3a3a3a; }
.scene { position: absolute; inset: 0; width: 100%; height: 100%; }
.cube-text { font-family: "Liberation Sans", sans-serif; font-size: 36px; }
.cube-text.front { font-size: 32px; }
.axis-text { font-family: "Liberation Sans", sans-serif; font-size: 25px; fill: #050505; }
.fps { position: absolute; left: 149px; bottom: 0; color: #080808; font-family: "Liberation Mono", monospace; font-size: 16px; }

/* status bar */
.statusbar { display: flex; align-items: center; gap: 6px; height: 37px; padding: 0 1px 0 6px; }
.status-text { flex: 1; }
.combo {
    position: relative;
    display: flex;
    align-items: center;
    height: 32px;
    padding: 0 4px;
    border: 1px solid #0a0a0a;
    border-radius: 3px;
    background: linear-gradient(#424242, #303030);
}
.combo select { appearance: none; padding-right: 11px; }
.combo-nav { padding-left: 7px; }
.combo-nav select { padding-right: 22px; }
.combo-ico { width: 10px; height: 14px; margin-right: 6px; }
.combo-arrow { position: absolute; right: 2px; bottom: 8px; width: 8px; height: 5px; }
```
